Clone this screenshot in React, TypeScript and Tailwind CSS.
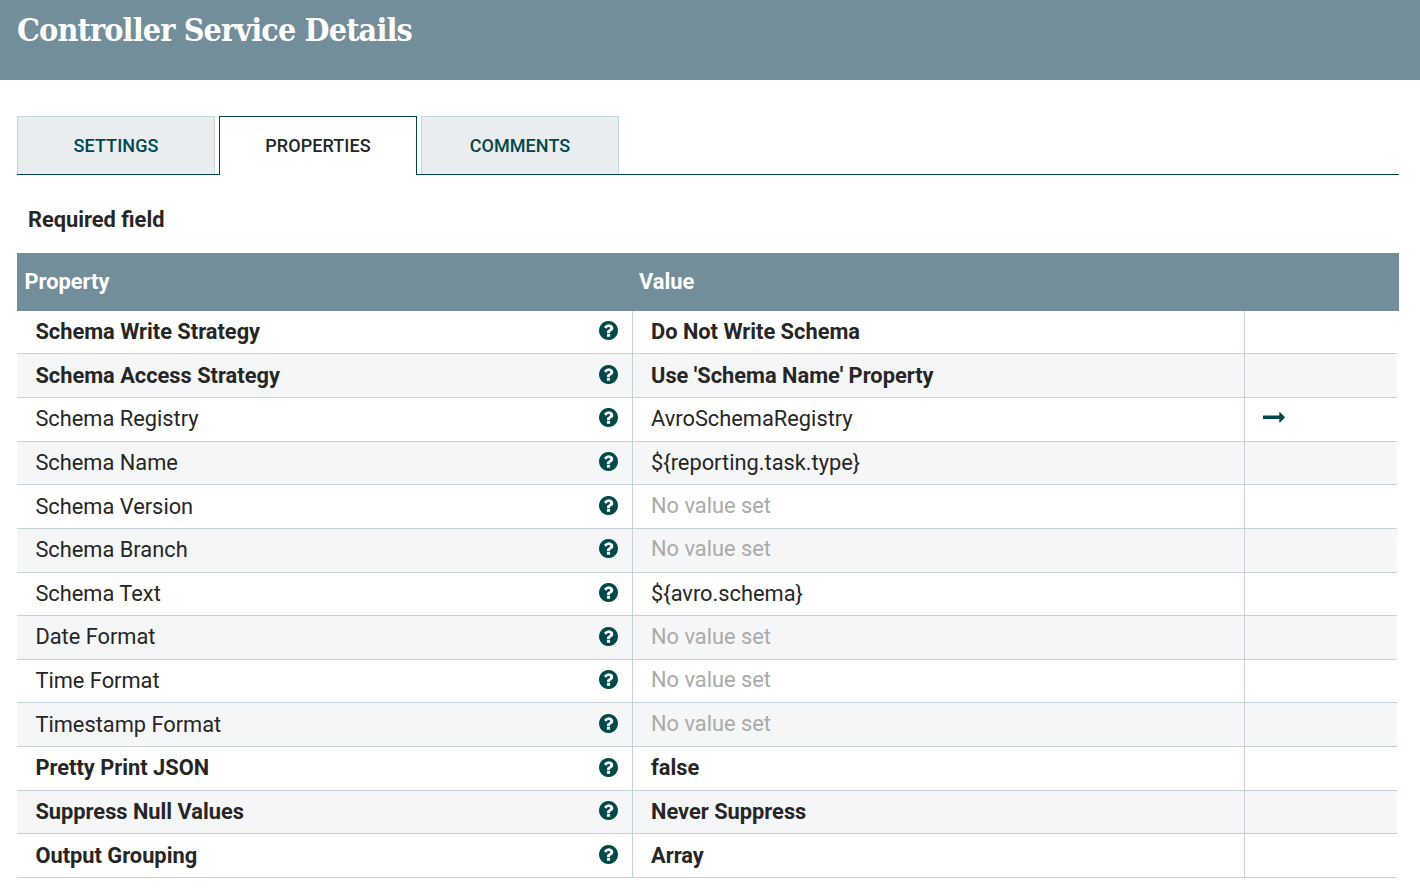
import React from "react";

type Row = {
  name: string;
  value: string | null;
  required?: boolean;
  goTo?: boolean;
  height: string;
  namePad: string;
  iconPad: string;
  valuePad: string;
};

const rows: Row[] = [
  { name: "Schema Write Strategy", value: "Do Not Write Schema", required: true, height: "h-[43px]", namePad: "pt-[6px]", iconPad: "pt-[10px]", valuePad: "pt-[6px]" },
  { name: "Schema Access Strategy", value: "Use 'Schema Name' Property", required: true, height: "h-[44px]", namePad: "pt-[7px]", iconPad: "pt-[11px]", valuePad: "pt-[7px]" },
  { name: "Schema Registry", value: "AvroSchemaRegistry", goTo: true, height: "h-[44px]", namePad: "pt-[6px]", iconPad: "pt-[10px]", valuePad: "pt-[6px]" },
  { name: "Schema Name", value: "${reporting.task.type}", height: "h-[43px]", namePad: "pt-[6px]", iconPad: "pt-[10px]", valuePad: "pt-[6px]" },
  { name: "Schema Version", value: null, height: "h-[44px]", namePad: "pt-[7px]", iconPad: "pt-[11px]", valuePad: "pt-[6px]" },
  { name: "Schema Branch", value: null, height: "h-[44px]", namePad: "pt-[6px]", iconPad: "pt-[10px]", valuePad: "pt-[5px]" },
  { name: "Schema Text", value: "${avro.schema}", height: "h-[43px]", namePad: "pt-[6px]", iconPad: "pt-[10px]", valuePad: "pt-[6px]" },
  { name: "Date Format", value: null, height: "h-[44px]", namePad: "pt-[6px]", iconPad: "pt-[11px]", valuePad: "pt-[6px]" },
  { name: "Time Format", value: null, height: "h-[43px]", namePad: "pt-[6px]", iconPad: "pt-[10px]", valuePad: "pt-[5px]" },
  { name: "Timestamp Format", value: null, height: "h-[44px]", namePad: "pt-[7px]", iconPad: "pt-[11px]", valuePad: "pt-[6px]" },
  { name: "Pretty Print JSON", value: "false", required: true, height: "h-[44px]", namePad: "pt-[6px]", iconPad: "pt-[11px]", valuePad: "pt-[6px]" },
  { name: "Suppress Null Values", value: "Never Suppress", required: true, height: "h-[43px]", namePad: "pt-[6px]", iconPad: "pt-[10px]", valuePad: "pt-[6px]" },
  { name: "Output Grouping", value: "Array", required: true, height: "h-[44px]", namePad: "pt-[7px]", iconPad: "pt-[11px]", valuePad: "pt-[7px]" },
];

function HelpIcon() {
  return (
    <svg viewBox="128 128 1536 1536" className="size-[19px] shrink-0 fill-[#004849]">
      <path d="M1024 1376v-192q0-14-9-23t-23-9h-192q-14 0-23 9t-9 23v192q0 14 9 23t23 9h192q14 0 23-9t9-23zM1280 704q0-88-55.5-163t-138.5-116t-170-41q-243 0-371 213q-15 24 8 42l132 100q7 6 19 6q16 0 25-12q53-68 86-92q34-24 86-24q48 0 85.5 26t37.5 59q0 38-20 61t-68 45q-63 28-115.5 86.5t-52.5 125.5v36q0 14 9 23t23 9h192q14 0 23-9t9-23q0-19 21.5-49.5t54.5-49.5q32-18 49-28.5t46-35t44.5-48t28-60.5t12.5-81zM1664 896q0 209-103 385.5t-279.5 279.5t-385.5 103t-385.5-103t-279.5-279.5t-103-385.5t103-385.5t279.5-279.5t385.5-103t385.5 103t279.5 279.5t103 385.5z" />
    </svg>
  );
}

function ArrowIcon() {
  return (
    <svg viewBox="0 510 1728 770" preserveAspectRatio="none" className="h-[10.5px] w-[22px] fill-[#004849]">
      <path d="M1728 893q0 14-10 24l-384 354q-16 14-35 6-19-9-19-29v-224h-1248q-14 0-23-9t-9-23v-192q0-14 9-23t23-9h1248v-224q0-21 19-29t35 5l384 350q10 10 10 23z" />
    </svg>
  );
}

function Tab({ label, active = false }: { label: string; active?: boolean }) {
  return (
    <div
      className={
        active
          ? "flex h-[59px] w-[198px] justify-center border border-b-0 border-[#004849] bg-white pt-[15px] text-[18px] leading-[28px] font-medium tracking-[0.08px] text-[#262626]"
          : "flex h-[58px] w-[198px] justify-center border border-b-0 border-[#c7d7d9] bg-[#e9edf0] pt-[15px] text-[18px] leading-[28px] font-medium tracking-[0.08px] text-[#004849]"
      }
    >
      {label}
    </div>
  );
}

export default function App() {
  return (
    <div className="h-[892px] w-[1420px] overflow-hidden bg-white font-['Roboto',sans-serif] text-[21.82px] text-[#262626]">
      <header className="h-20 bg-[#728e9b] pt-[10px] pl-[17px]">
        <h1 className="font-['Roboto_Slab','DejaVu_Serif_Condensed','DejaVu_Serif',serif] text-[32px] leading-[40px] font-bold tracking-[-0.86px] whitespace-nowrap text-white">
          Controller Service Details
        </h1>
      </header>

      <main className="mr-[21px] ml-[17px] pt-9">
        <nav className="flex h-[59px] items-start gap-1 bg-[linear-gradient(#004849,#004849)] bg-[length:100%_1px] bg-bottom bg-no-repeat">
          <Tab label="SETTINGS" />
          <Tab label="PROPERTIES" active />
          <Tab label="COMMENTS" />
        </nav>

        <div className="h-[78px] pt-[30px] pl-[11px] leading-[30px] font-bold">Required field</div>

        <section>
          <div className="flex h-[58px] bg-[#728e9b] pt-[14px] leading-[30px] font-bold text-white">
            <div className="w-[614px] pl-[7.5px]">Property</div>
            <div className="pl-2">Value</div>
          </div>
          <div className="mr-0.5">
            {rows.map((row, i) => (
              <div
                key={row.name}
                className={`flex border-b border-[#c7d2d7] leading-[30px] ${row.height} ${i % 2 ? "bg-[#f4f6f7]" : "bg-white"} ${row.required ? "font-bold" : "font-normal"}`}
              >
                <div className="flex w-[616px] justify-between border-r border-[#c7d2d7] pr-[14.5px] pl-[18.4px]">
                  <span className={row.namePad}>{row.name}</span>
                  <span className={row.iconPad}>
                    <HelpIcon />
                  </span>
                </div>
                <div
                  className={`w-[612px] border-r border-[#c7d2d7] pl-[18px] ${row.valuePad} ${row.value === null ? "text-[#aaaaaa]" : ""}`}
                >
                  {row.value ?? "No value set"}
                </div>
                <div className="pt-[14px] pl-[18px]">{row.goTo && <ArrowIcon />}</div>
              </div>
            ))}
          </div>
        </section>
      </main>
    </div>
  );
}
